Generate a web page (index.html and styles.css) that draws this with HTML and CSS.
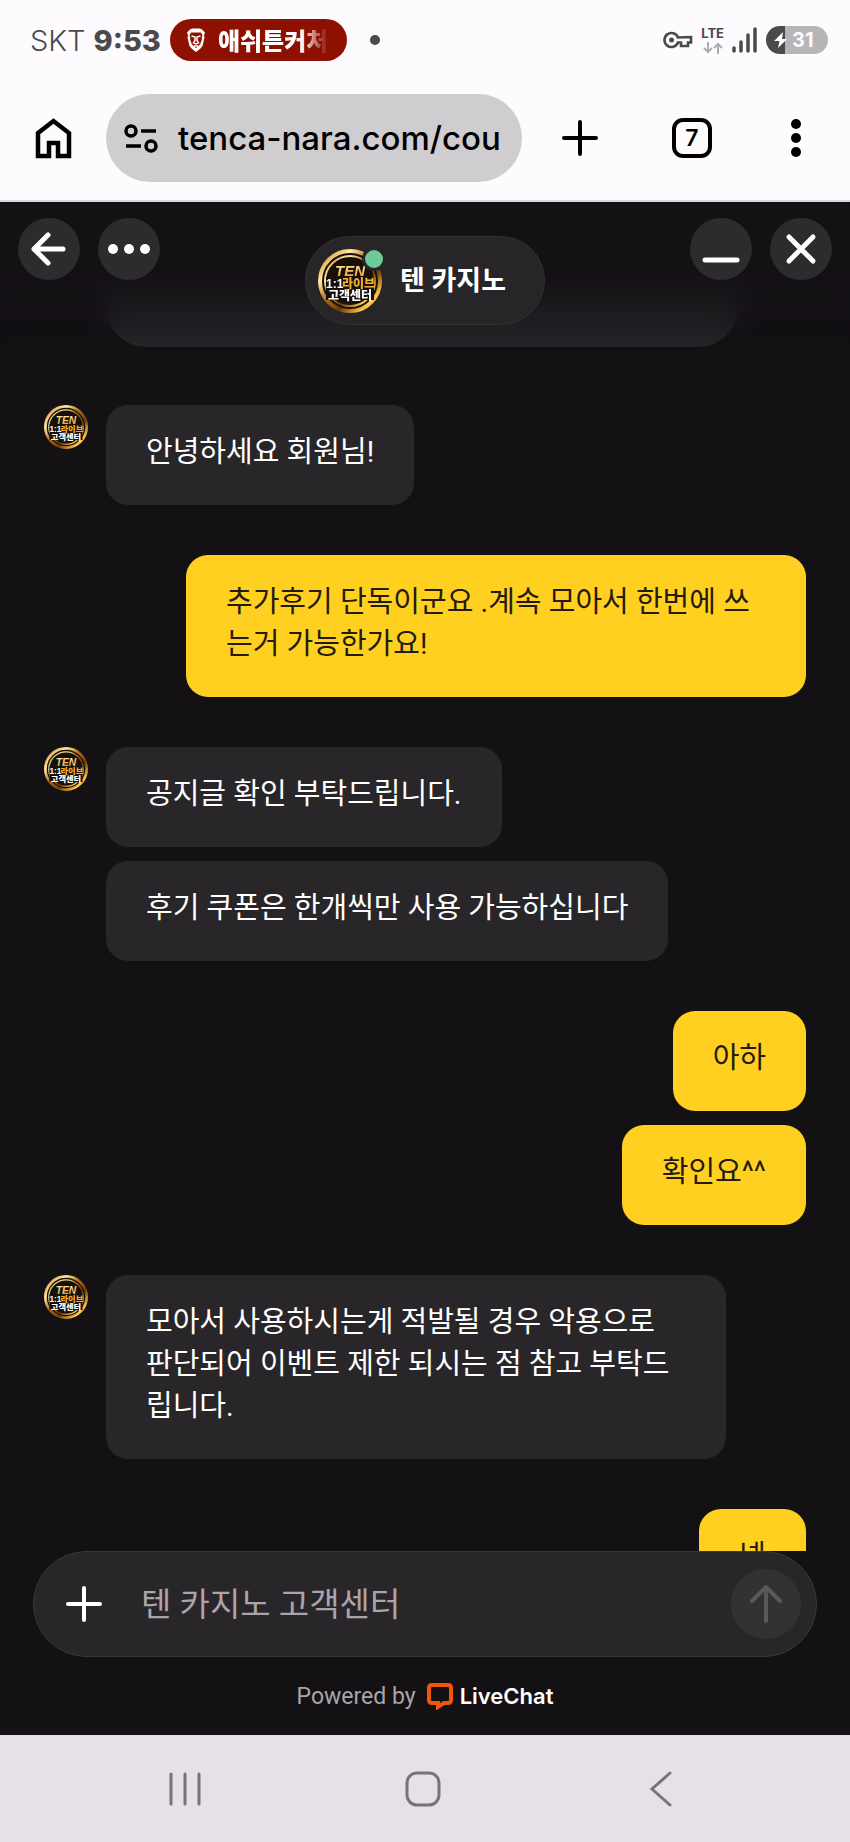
FILE: index.html
```html
<!DOCTYPE html>
<html lang="ko">
<head>
  <meta charset="UTF-8" />
  <meta name="viewport" content="width=device-width, initial-scale=1" />
  <title>텐 카지노</title>
  <link rel="stylesheet" href="styles.css">
</head>
<body>

  <!-- Shared coin logo -->
  <svg class="defs" width="0" height="0" aria-hidden="true">
    <defs>
      <linearGradient id="gold" x1="0" y1="0" x2="1" y2="1">
        <stop offset="0" stop-color="#c87d1c" />
        <stop offset="0.25" stop-color="#ffe9a0" />
        <stop offset="0.45" stop-color="#b56c14" />
        <stop offset="0.65" stop-color="#6d3c08" />
        <stop offset="0.85" stop-color="#ffc94a" />
        <stop offset="1" stop-color="#a8620f" />
      </linearGradient>
      <linearGradient id="goldText" x1="0" y1="0" x2="0" y2="1">
        <stop offset="0" stop-color="#fff0b0" />
        <stop offset="1" stop-color="#f09a12" />
      </linearGradient>
      <symbol id="coin" viewBox="0 0 64 64">
        <circle cx="32" cy="32" r="31" fill="#15100c" />
        <circle cx="32" cy="32" r="30" fill="none" stroke="url(#gold)" stroke-width="4" />
        <circle cx="32" cy="32" r="25" fill="none" stroke="url(#gold)" stroke-width="2" />
        <rect x="8" y="28" width="48" height="23" fill="#15100c" />
        <text x="32" y="27" text-anchor="middle" class="coinTop">TEN</text>
        <text x="8" y="39" class="coinNum">1:1</text>
        <text x="24" y="39" class="coinMid">라이브</text>
        <text x="32" y="51" text-anchor="middle" class="coinLow">고객센터</text>
      </symbol>
    </defs>
  </svg>

  <!-- STATUS BAR -->
  <div id="statusBar">
    <span class="carrier">SKT</span>
    <span class="clock">9:53</span>
    <div class="nowChip">
      <svg width="20" height="24" viewBox="0 0 20 24">
        <path d="M4 1.500 6 .5h8l2 1 3 3-1 3 .5 2-2 8.500-2 2.500-4.500 3.500-4.500-3.500-2-2.500-2-8.500L2 7.500l-1-3z" fill="#fff" />
        <path d="M5 4.500h10l1.500 3-1 3 .5 1-2 5-4 3.500-4-3.500-2-5 .5-1-1-3z" fill="#8e1000" />
        <path d="M5.500 8 9 9v3.500l-1.500 2.500L10 16l2.500-1-1.500-2.500V9l3.500-1M8 18h4" fill="none" stroke="#fff" stroke-width="1.500" />
      </svg>
      <span class="chipText">애쉬튼커처</span>
    </div>
    <span class="dot"></span>

    <div class="statusIcons">
      <svg width="30" height="18" viewBox="0 0 30 18">
        <path d="M15 6.500A7 7 0 1 0 15 11.500h3V15h7v-3.500h3V6z" fill="none" stroke="#4b494c" stroke-width="2.600" />
        <circle cx="8.500" cy="9" r="2.500" fill="#4b494c" />
      </svg>
      <div class="lte">
        <span>LTE</span>
        <svg width="20" height="12" viewBox="0 0 20 12" fill="none" stroke="#aeacaf" stroke-width="2">
          <path d="M5 0v10M1 6l4 4 4-4M15 12V2M11 6l4-4 4 4" />
        </svg>
      </div>
      <svg width="26" height="26" viewBox="0 0 26 26" stroke="#4b494c" stroke-width="3.500" stroke-linecap="round">
        <path d="M2 21v3M9 15v9M16 8v16M23 2v22" />
      </svg>
      <div class="battery">
        <svg width="14" height="16" viewBox="0 0 14 16"><path d="M9 0 0 9h5.500L4 16 13 7H8z" fill="#fff" /></svg>
        <span>31</span>
      </div>
    </div>
  </div>

  <!-- BROWSER TOOLBAR -->
  <div id="toolbar">
    <button class="iconBtn" aria-label="홈">
      <svg width="40" height="42" viewBox="0 0 40 42"><path d="M4 16 19.500 4 35 16v23H24V26h-9v13H4z" fill="none" stroke="#000" stroke-width="4.500" /></svg>
    </button>
    <div class="addressBar">
      <svg width="34" height="30" viewBox="0 0 34 30" fill="none" stroke="#000" stroke-width="3.500">
        <circle cx="7" cy="8" r="5" />
        <circle cx="27" cy="23" r="5" />
        <path d="M17 8h15M2 23h15" />
      </svg>
      <input type="text" aria-label="주소" value="tenca-nara.com/cou" />
    </div>
    <div class="toolbarActions">
      <button class="iconBtn" aria-label="새 탭">
        <svg width="40" height="40" viewBox="0 0 40 40"><path d="M20 4v32M4 20h32" stroke="#000" stroke-width="4" stroke-linecap="round" /></svg>
      </button>
      <button class="tabsBtn" aria-label="탭 7개">7</button>
      <button class="menuBtn" aria-label="메뉴">
        <svg width="24" height="40" viewBox="0 0 24 40"><circle cx="12" cy="6" r="5" /><circle cx="12" cy="20" r="5" /><circle cx="12" cy="34" r="5" /></svg>
      </button>
    </div>
  </div>

  <!-- CHAT -->
  <main id="chat">
    <div class="headerFade"></div>
    <header>
      <div class="headerGroup">
        <button class="roundBtn" aria-label="뒤로">
          <svg width="36" height="36" viewBox="0 0 36 36"><path d="M32 18H3M17 4 3 18l14 14" /></svg>
        </button>
        <button class="roundBtn" aria-label="더보기">
          <svg class="solid" width="42" height="12" viewBox="0 0 42 12"><circle cx="5" cy="6" r="5" /><circle cx="21" cy="6" r="5" /><circle cx="37" cy="6" r="5" /></svg>
        </button>
      </div>
      <div class="agent">
        <div class="agentAvatar">
          <svg width="64" height="64"><use href="#coin" /></svg>
          <span class="online"></span>
        </div>
        <h1>텐 카지노</h1>
      </div>
      <div class="headerGroup">
        <button class="roundBtn" aria-label="최소화">
          <svg width="38" height="36" viewBox="0 0 38 36"><path d="M3 29h32" /></svg>
        </button>
        <button class="roundBtn" aria-label="닫기">
          <svg width="32" height="32" viewBox="0 0 32 32"><path d="M4 4l24 24M28 4 4 28" /></svg>
        </button>
      </div>
    </header>

    <div id="messages">
      <div class="scrolledCard"></div>

      <div class="group">
        <svg class="avatar" width="44" height="44"><use href="#coin" /></svg>
        <div class="bubbles">
          <p class="bubble">안녕하세요 회원님!</p>
        </div>
      </div>

      <div class="group mine">
        <div class="bubbles">
          <p class="bubble">추가후기 단독이군요 .계속 모아서 한번에 쓰는거 가능한가요!</p>
        </div>
      </div>

      <div class="group">
        <svg class="avatar" width="44" height="44"><use href="#coin" /></svg>
        <div class="bubbles">
          <p class="bubble">공지글 확인 부탁드립니다.</p>
          <p class="bubble">후기 쿠폰은 한개씩만 사용 가능하십니다</p>
        </div>
      </div>

      <div class="group mine">
        <div class="bubbles">
          <p class="bubble">아하</p>
          <p class="bubble">확인요^^</p>
        </div>
      </div>

      <div class="group">
        <svg class="avatar" width="44" height="44"><use href="#coin" /></svg>
        <div class="bubbles">
          <p class="bubble">모아서 사용하시는게 적발될 경우 악용으로<br>판단되어 이벤트 제한 되시는 점 참고 부탁드립니다.</p>
        </div>
      </div>

      <div class="group mine">
        <div class="bubbles">
          <p class="bubble">넵</p>
        </div>
      </div>
    </div>

    <form id="composer">
      <button type="button" class="attachBtn" aria-label="첨부">
        <svg width="40" height="40" viewBox="0 0 40 40"><path d="M20 4v32M4 20h32" stroke="#fff" stroke-width="4" stroke-linecap="round" /></svg>
      </button>
      <input type="text" aria-label="메시지" placeholder="텐 카지노 고객센터" />
      <button type="button" class="sendBtn" aria-label="보내기">
        <svg width="36" height="40" viewBox="0 0 36 40"><path d="M18 37V3M4 17 18 3l14 14" fill="none" stroke="#5b585c" stroke-width="4" stroke-linecap="round" stroke-linejoin="round" /></svg>
      </button>
    </form>

    <div id="poweredBy">
      <span>Powered by</span>
      <a href="#">
        <svg width="28" height="28" viewBox="0 0 28 28"><path d="M6 3h16q3 0 3 3v12q0 3-3 3h-4l-6 4v-4H6q-3 0-3-3V6q0-3 3-3z" fill="none" stroke="#f0560c" stroke-width="4" /></svg>
        LiveChat
      </a>
    </div>
  </main>

  <!-- SYSTEM NAVIGATION -->
  <nav id="navBar">
    <button aria-label="최근 앱">
      <svg width="36" height="36" viewBox="0 0 36 36"><path d="M4 3v30M18 3v30M32 3v30" /></svg>
    </button>
    <button aria-label="홈 화면">
      <svg width="38" height="38" viewBox="0 0 38 38"><rect x="3" y="3" width="32" height="32" rx="10" /></svg>
    </button>
    <button aria-label="이전">
      <svg width="24" height="38" viewBox="0 0 24 38"><path d="M21 3 3 19l18 16" /></svg>
    </button>
  </nav>

</body>
</html>
```
FILE: styles.css
```css
/* RESET */
* {
  margin: 0;
  padding: 0;
  box-sizing: border-box;
}

body {
  display: flex;
  flex-direction: column;
  height: 100vh;
  background-color: #fdfbfe;
  font-family: Roboto, "Noto Sans CJK KR", sans-serif;
  color: #fff;
}

button {
  display: flex;
  align-items: center;
  justify-content: center;
  flex-shrink: 0;
  background: none;
  border: none;
  cursor: pointer;
}
input {
  width: 100%;
  min-width: 0;
  background: none;
  border: none;
  outline: none;
}
svg {
  display: block;
  flex-shrink: 0;
}
.defs {
  position: absolute;
}

/* Coin logo lettering */
.coinTop,
.coinNum,
.coinMid,
.coinLow {
  font-family: "Liberation Sans", "Noto Sans CJK KR", sans-serif;
  font-weight: 900;
  font-size: 12px;
}
.coinTop {
  font-size: 15px;
  font-style: italic;
  fill: url(#goldText);
}
.coinNum,
.coinLow {
  fill: #fff;
}
.coinMid {
  fill: #f7b02c;
}

/* STATUS BAR */
#statusBar {
  display: flex;
  align-items: center;
  flex-shrink: 0;
  height: 80px;
  padding: 0 22px 0 30px;
  color: #4b494c;
  font-family: Inter, sans-serif;
  font-size: 29px;
}
.carrier {
  font-weight: 300;
}
.clock {
  margin-left: 8px;
  font-weight: 800;
}
.nowChip {
  display: flex;
  align-items: center;
  gap: 12px;
  width: 177px;
  height: 42px;
  margin-left: 9px;
  padding: 0 16px;
  border-radius: 21px;
  background-color: #8e1000;
  color: #fff;
}
.chipText {
  white-space: nowrap;
  font-family: "Noto Sans CJK KR", sans-serif;
  font-size: 24px;
  font-weight: 900;
  line-height: 42px;
  -webkit-mask-image: linear-gradient(to right, #000 75%, transparent);
  mask-image: linear-gradient(to right, #000 75%, transparent);
}
.dot {
  width: 10px;
  height: 10px;
  margin-left: 23px;
  border-radius: 50%;
  background-color: #4b494c;
}
.statusIcons {
  display: flex;
  align-items: center;
  gap: 8px;
  margin-left: auto;
}
.lte {
  display: flex;
  flex-direction: column;
  align-items: center;
  gap: 2px;
  font-size: 13px;
  font-weight: 700;
  line-height: 14px;
}
.battery {
  display: flex;
  align-items: center;
  gap: 4px;
  width: 62px;
  height: 28px;
  padding-left: 8px;
  border-radius: 14px;
  background: linear-gradient(to right, #4b494c 31%, #b7b5b8 31%);
  color: #fdfbfe;
  font-size: 20px;
  font-weight: 700;
}

/* BROWSER TOOLBAR */
#toolbar {
  display: flex;
  align-items: center;
  flex-shrink: 0;
  padding: 14px 42px 18px 34px;
  border-bottom: 2px solid #d8d9dc;
}
.iconBtn {
  width: 40px;
  height: 44px;
}
.addressBar {
  display: flex;
  align-items: center;
  flex: 1;
  gap: 20px;
  min-width: 0;
  height: 88px;
  margin: 0 38px 0 32px;
  padding: 0 12px 0 18px;
  border-radius: 44px;
  background-color: #cfcdd0;
}
.addressBar input {
  flex: 1;
  font-family: Inter, sans-serif;
  font-size: 33px;
  font-weight: 500;
  color: #000;
}
.toolbarActions {
  display: flex;
  align-items: center;
  flex-shrink: 0;
  gap: 72px;
}
.tabsBtn {
  width: 40px;
  height: 40px;
  border: 4px solid #000;
  border-radius: 11px;
  color: #000;
  font-family: Inter, sans-serif;
  font-size: 23px;
  font-weight: 600;
}

/* CHAT */
#chat {
  position: relative;
  display: flex;
  flex-direction: column;
  flex: 1;
  min-height: 0;
  background-color: #141115;
}

/* Header floats over the scrolled messages */
header {
  position: absolute;
  top: 0;
  left: 0;
  right: 0;
  z-index: 2;
  display: flex;
  justify-content: space-between;
  align-items: flex-start;
  padding: 16px 18px 0;
}
.headerFade {
  position: absolute;
  top: 0;
  left: 0;
  right: 0;
  z-index: 1;
  height: 142px;
  background: linear-gradient(to bottom, #141115 50%, transparent);
  backdrop-filter: blur(12px);
  -webkit-mask-image: linear-gradient(to bottom, #000 75%, transparent);
  mask-image: linear-gradient(to bottom, #000 75%, transparent);
}
.headerGroup {
  display: flex;
  gap: 18px;
}
.roundBtn {
  width: 62px;
  height: 62px;
  border-radius: 50%;
  background-color: #2d2b2e;
}
.roundBtn svg {
  fill: none;
  stroke: #fff;
  stroke-width: 5;
  stroke-linecap: round;
  stroke-linejoin: round;
}
.roundBtn svg.solid {
  fill: #fff;
  stroke: none;
}
.agent {
  display: flex;
  align-items: center;
  gap: 18px;
  height: 89px;
  margin-top: 18px;
  padding: 0 38px 0 12px;
  border: 1px solid #333034;
  border-radius: 45px;
  background-color: #272528;
}
.agent h1 {
  font-size: 27px;
  font-weight: 700;
  line-height: 40px;
}
.agentAvatar {
  position: relative;
}
.online {
  position: absolute;
  top: -2px;
  right: -4px;
  width: 24px;
  height: 24px;
  border: 3px solid #272528;
  border-radius: 50%;
  background-color: #6dcb9a;
}

/* MESSAGES */
#messages {
  display: flex;
  flex-direction: column;
  flex: 1;
  gap: 50px;
  min-height: 0;
  overflow: hidden;
  padding: 0 44px;
}
#messages > * {
  flex-shrink: 0;
}
/* Card that is mostly scrolled out of view */
.scrolledCard {
  height: 145px;
  margin: 0 68px 8px 62px;
  border-radius: 0 0 40px 40px;
  background-color: #252326;
}
.group {
  display: flex;
  gap: 18px;
}
.bubbles {
  display: flex;
  flex-direction: column;
  align-items: flex-start;
  gap: 14px;
}
.bubble {
  max-width: 620px;
  padding: 26px 40px 32px;
  border-radius: 22px;
  background-color: #29262a;
  font-size: 29px;
  line-height: 42px;
}
.mine {
  justify-content: flex-end;
}
.mine .bubbles {
  align-items: flex-end;
}
.mine .bubble {
  background-color: #ffd020;
  color: #231b0c;
}

/* COMPOSER */
#composer {
  display: flex;
  align-items: center;
  flex-shrink: 0;
  height: 106px;
  margin: 0 33px;
  padding: 0 15px 0 20px;
  border: 1px solid #3a373b;
  border-radius: 53px;
  background-color: #29262a;
}
.attachBtn {
  width: 60px;
  height: 60px;
}
#composer input {
  flex: 1;
  margin: 0 27px;
  font-family: inherit;
  font-size: 33px;
  color: #fff;
}
#composer input::placeholder {
  color: #a9a5aa;
}
.sendBtn {
  width: 70px;
  height: 70px;
  border-radius: 50%;
  background-color: #343135;
}

#poweredBy {
  display: flex;
  align-items: center;
  justify-content: center;
  flex-shrink: 0;
  gap: 10px;
  height: 78px;
  font-size: 23px;
  color: #a9a5aa;
}
#poweredBy a {
  display: flex;
  align-items: center;
  gap: 6px;
  font-family: Inter, sans-serif;
  font-size: 22px;
  font-weight: 600;
  color: #fff;
  text-decoration: none;
}

/* SYSTEM NAVIGATION */
#navBar {
  display: grid;
  grid-template-columns: repeat(3, 1fr);
  flex-shrink: 0;
  height: 107px;
  padding: 0 70px 0 66px;
  background-color: #e7e1e7;
}
#navBar svg {
  fill: none;
  stroke: #77737a;
  stroke-width: 3;
  stroke-linecap: round;
}
```
